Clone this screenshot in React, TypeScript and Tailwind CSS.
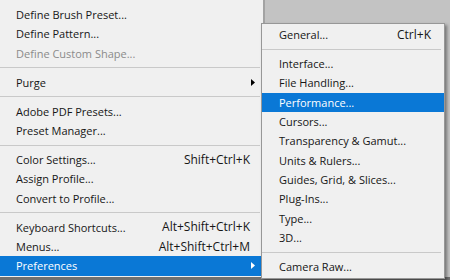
import React from "react";

type Item =
  | { label: string; shortcut?: string; disabled?: boolean; sub?: boolean; active?: boolean }
  | "sep";

const mainItems: Item[] = [
  { label: "Define Brush Preset..." },
  { label: "Define Pattern..." },
  { label: "Define Custom Shape...", disabled: true },
  "sep",
  { label: "Purge", sub: true },
  "sep",
  { label: "Adobe PDF Presets..." },
  { label: "Preset Manager..." },
  "sep",
  { label: "Color Settings...", shortcut: "Shift+Ctrl+K" },
  { label: "Assign Profile..." },
  { label: "Convert to Profile..." },
  "sep",
  { label: "Keyboard Shortcuts...", shortcut: "Alt+Shift+Ctrl+K" },
  { label: "Menus...", shortcut: "Alt+Shift+Ctrl+M" },
  { label: "Preferences", sub: true, active: true },
];

const prefItems: Item[] = [
  { label: "General...", shortcut: "Ctrl+K" },
  "sep",
  { label: "Interface..." },
  { label: "File Handling..." },
  { label: "Performance...", active: true },
  { label: "Cursors..." },
  { label: "Transparency & Gamut..." },
  { label: "Units & Rulers..." },
  { label: "Guides, Grid, & Slices..." },
  { label: "Plug-Ins..." },
  { label: "Type..." },
  { label: "3D..." },
  "sep",
  { label: "Camera Raw..." },
];

const Arrow = ({ white }: { white?: boolean }) => (
  <svg width="4" height="7" viewBox="0 0 4 7" className="shrink-0">
    <polygon points="0,0 4,3.5 0,7" fill={white ? "#ffffff" : "#000000"} />
  </svg>
);

const MenuRows = ({ items, textLeft }: { items: Item[]; textLeft: string }) => (
  <>
    {items.map((item, i) =>
      item === "sep" ? (
        <div key={i} className="h-[9.67px] flex items-center pr-[3px]">
          <div className="h-px w-full bg-[#c9c9c9]" />
        </div>
      ) : (
        <div
          key={i}
          className={`flex items-center h-[19.33px] pr-[7px] ${textLeft} ${
            item.active ? "bg-[#0a78d6] text-white" : item.disabled ? "text-[#8b8b8b]" : "text-[#161616]"
          }`}
        >
          <span className="flex-1 text-[11px]">{item.label}</span>
          {item.shortcut && <span className="mr-[6px] text-[12px]">{item.shortcut}</span>}
          {item.sub && (
            <span className="mr-[1px]">
              <Arrow white={item.active} />
            </span>
          )}
        </div>
      )
    )}
  </>
);

export default function App() {
  return (
    <div
      className="relative w-[450px] h-[280px] overflow-hidden bg-[#c3c3c3] leading-none"
      style={{ fontFamily: '"Open Sans", "Noto Sans", sans-serif' }}
    >
      <div className="flex flex-col h-full">
        <div className="flex h-[277px]">
          <div className="w-[265px] h-full bg-[#f0f0f0] border-r-2 border-[#a3a3a3] pt-[5px]">
            <MenuRows items={mainItems} textLeft="pl-[16px]" />
          </div>
          <div className="flex-1" />
        </div>
        <div className="h-[3px] bg-[#707070]" />
      </div>

      {/* Preferences submenu */}
      <div className="absolute left-[261px] top-[23px] w-[184px] h-[256px] bg-[#f0f0f0] border border-[#979797] pt-px shadow-[2px_2px_3px_rgba(0,0,0,0.4)]">
        <MenuRows items={prefItems} textLeft="pl-[17px]" />
      </div>
    </div>
  );
}
